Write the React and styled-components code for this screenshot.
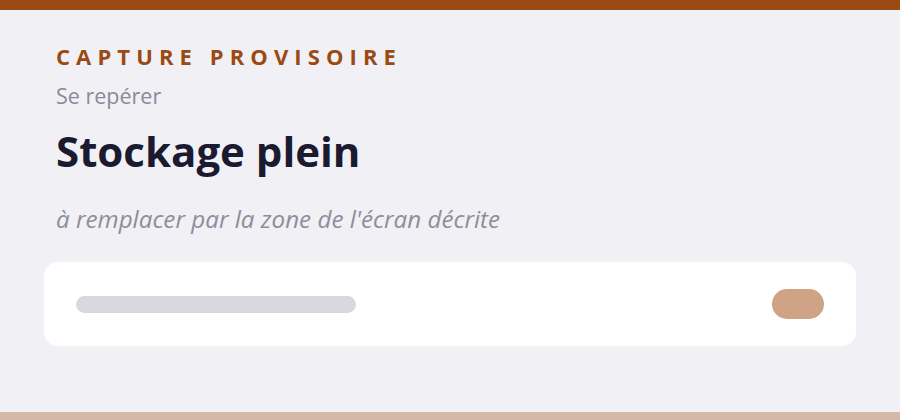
import React from "react";
import styled, { createGlobalStyle } from "styled-components";

const Global = createGlobalStyle`
  html, body { margin: 0; padding: 0; background: #f1f0f5; }
  * { box-sizing: border-box; }
`;

const Page = styled.div`
  min-height: 420px;
  display: flex;
  flex-direction: column;
  background: #f1f0f5;
  font-family: "Open Sans", "Noto Sans", sans-serif;
`;

const Bar = styled.div`
  height: ${(p) => p.$h}px;
  background: ${(p) => p.$color};
  flex-shrink: 0;
`;

const Content = styled.main`
  flex: 1;
  display: flex;
  flex-direction: column;
  padding: 32px 44px 0;
`;

const Header = styled.header`
  padding: 0 12px;
  display: flex;
  flex-direction: column;
`;

const Eyebrow = styled.div`
  font-size: 22px;
  font-weight: 700;
  letter-spacing: 6.1px;
  color: #9a4a12;
  line-height: 28px;
`;

const Sub = styled.div`
  font-size: 21.5px;
  color: #8a8a99;
  line-height: 28px;
  margin-top: 12px;
`;

const Title = styled.h1`
  margin: 16px 0 0;
  font-size: 42px;
  font-weight: 700;
  color: #1c1a30;
  line-height: 50px;
`;

const Note = styled.p`
  margin: 28px 0 0;
  font-size: 24.2px;
  font-style: italic;
  color: #8e8d9a;
  line-height: 30px;
`;

const Card = styled.section`
  margin-top: 28px;
  height: 84px;
  background: #ffffff;
  border-radius: 14px;
  display: flex;
  align-items: center;
  justify-content: space-between;
  padding: 0 32px;
`;

const Skeleton = styled.div`
  width: 280px;
  height: 17px;
  border-radius: 9px;
  background: #d9d8de;
`;

const Pill = styled.div`
  width: 52px;
  height: 30px;
  border-radius: 15px;
  background: #cfa385;
`;

export default function App() {
  return (
    <>
      <Global />
      <Page>
        <Bar $h={10} $color="#9a4a12" />
        <Content>
          <Header>
            <Eyebrow>CAPTURE PROVISOIRE</Eyebrow>
            <Sub>Se repérer</Sub>
            <Title>Stockage plein</Title>
            <Note>à remplacer par la zone de l'écran décrite</Note>
          </Header>
          <Card>
            <Skeleton />
            <Pill />
          </Card>
        </Content>
        <Bar $h={8} $color="#d5b8a8" />
      </Page>
    </>
  );
}
